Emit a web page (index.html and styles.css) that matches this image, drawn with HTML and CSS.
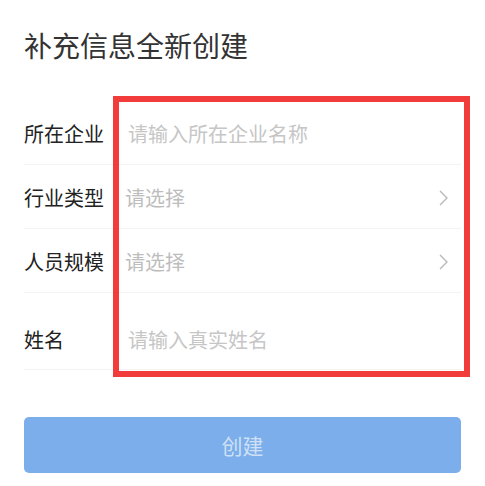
FILE: index.html
```html
<!DOCTYPE html>
<html lang="zh-CN">
<head>
    <meta charset="UTF-8">
    <meta name="viewport" content="width=device-width, initial-scale=1.0">
    <title>补充信息全新创建</title>
    <link rel="stylesheet" href="styles.css">
</head>
<body>
    <div class="page">
        <h1 class="title">补充信息全新创建</h1>

        <div class="form">
            <div class="row">
                <label class="label">所在企业</label>
                <input class="field" type="text" placeholder="请输入所在企业名称">
            </div>
            <div class="row">
                <span class="label">行业类型</span>
                <span class="picker">请选择</span>
                <svg class="arrow" width="9" height="16" viewBox="0 0 9 16"><path d="M1 1l7 7-7 7" fill="none" stroke="#b5b5b5" stroke-width="1.3"/></svg>
            </div>
            <div class="row">
                <span class="label">人员规模</span>
                <span class="picker">请选择</span>
                <svg class="arrow" width="9" height="16" viewBox="0 0 9 16"><path d="M1 1l7 7-7 7" fill="none" stroke="#b5b5b5" stroke-width="1.3"/></svg>
            </div>
            <div class="row row-tall">
                <label class="label">姓名</label>
                <input class="field" type="text" placeholder="请输入真实姓名">
            </div>
        </div>

        <button class="submit">创建</button>

        <!-- annotation box drawn over the form -->
        <div class="mark"></div>
    </div>
</body>
</html>
```

FILE: styles.css
```css
body {
    margin: 0;
    padding: 0;
    background-color: #fff;
    font-family: "Noto Sans CJK SC", "Noto Sans", sans-serif;
}

.page {
    position: relative;
    padding: 0 24px;
}

.title {
    margin: 0;
    padding-top: 26px;
    font-size: 28px;
    line-height: 38px;
    font-weight: normal;
    color: #333;
}

.form {
    margin-top: 37px;
}

.row {
    display: flex;
    align-items: center;
    height: 64px;
    border-bottom: 1px solid #f3f3f3;
    box-sizing: border-box;
    padding-top: 2px;
    padding-right: 13px;
}

.row-tall {
    height: 77px;
    padding-top: 16px;
}

.label {
    width: 101px;
    flex-shrink: 0;
    font-size: 20px;
    color: #222;
}

.field {
    flex: 1;
    border: none;
    outline: none;
    padding: 0 0 0 3px;
    font-family: inherit;
    font-size: 20px;
    color: #333;
    background: transparent;
}

.field::placeholder {
    color: #c6c6c6;
}

.picker {
    flex: 1;
    font-size: 20px;
    color: #bdbdbd;
}

.arrow {
    display: block;
}

.submit {
    display: block;
    width: 100%;
    height: 56px;
    margin-top: 47px;
    border: none;
    border-radius: 5px;
    background-color: #7baeea;
    color: #cfe0f6;
    font-family: inherit;
    font-size: 21px;
}

.mark {
    position: absolute;
    left: 113px;
    top: 96px;
    width: 357px;
    height: 281px;
    box-sizing: border-box;
    border: 6px solid #f23b3b;
}
```
